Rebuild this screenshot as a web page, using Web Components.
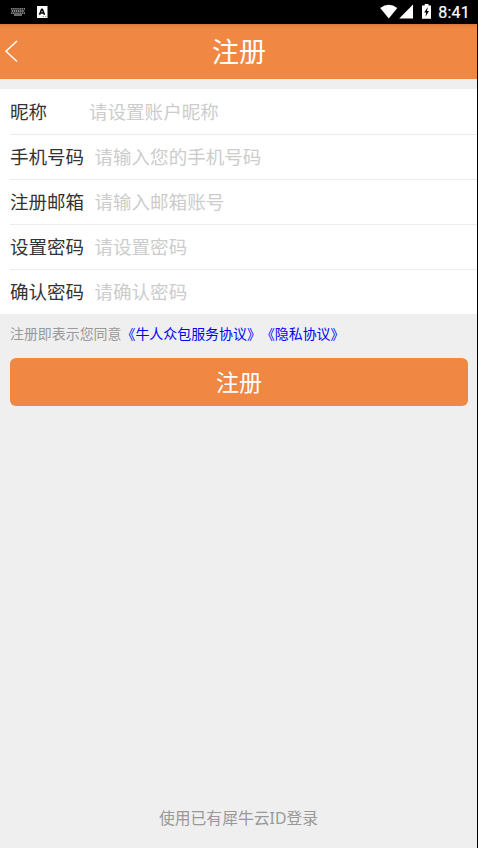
<!DOCTYPE html>
<html lang="zh-CN">
<head>
<meta charset="utf-8">
<title>注册</title>
<style>
html, body { margin: 0; height: 100%; background: #000; }
body { font-family: "Noto Sans CJK SC", sans-serif; overflow: hidden; }
</style>
</head>
<body>
<register-page></register-page>
<script>
const define = (name, html) => {
  const template = document.createElement('template');
  template.innerHTML = html;
  customElements.define(name, class extends HTMLElement {
    constructor() {
      super();
      this.attachShadow({ mode: 'open' }).append(template.content.cloneNode(true));
    }
  });
};

define('status-bar', `
<style>
:host { display: flex; height: 24px; background: #000; color: #fff; align-items: center; box-sizing: border-box; }
svg { display: block; flex: none; }
.keys { margin-left: 11px; }
.app { margin-left: 11px; }
.wifi { margin-left: auto; }
.battery { margin-left: 8px; }
time { font: 400 16px/24px Roboto, sans-serif; margin: 1px 8px 0 7px; letter-spacing: .25px; -webkit-text-stroke: .2px #fff; }
</style>
<svg class="keys" width="15" height="24" viewBox="0 0 15 24" fill="none" stroke="#b4b4b4"><path d="M0 8.900H14M.7 11H13.500M0 13.100H14" stroke-width="1.300" stroke-dasharray="1.500 .6"/><path d="M3 15H11" stroke-width="1.200"/></svg>
<svg class="app" width="11" height="24" viewBox="0 0 11 24"><rect x="-.5" y="6" width="11" height="12" rx=".5" fill="#fff"/><path d="M2.500 14.700L4.600 9.300H5.400L7.500 14.700M3.500 13H6.500" fill="none" stroke="#000" stroke-width="1.500" stroke-linejoin="bevel"/><path d="M5.500 16.500H7M8 16.500H9.400" stroke="#777" stroke-width=".7"/></svg>
<svg class="wifi" width="34" height="24" viewBox="0 0 34 24" fill="#fff"><path d="M.2 8Q8.800 1.600 17.300 8L8.800 18.500Z"/><path d="M33 4.500V18.500H19.200Z"/></svg>
<svg class="battery" width="9" height="24" viewBox="0 0 9 24"><path d="M0 5.500H2.700V4H6.500V5.500H9V18.700H0Z" fill="#fff"/><path d="M5.800 7L2.200 12.500H4.200L3.500 16.800L7 11H5Z" fill="#000"/></svg>
<time>8:41</time>`);

define('nav-bar', `
<style>
:host { display: grid; grid-template-columns: 40px 1fr 39px; align-items: center; height: 55px; background: linear-gradient(#d9783a 0, #eb8340 2px, #f08742 5px); color: #fff; }
h1 { margin: 0; font-size: 27px; line-height: 53px; height: 55px; font-weight: 400; text-align: center; }
svg { display: block; }
</style>
<svg width="24" height="55" viewBox="0 0 24 55" fill="none" stroke="#fff" stroke-width="1.500"><path d="M17 17L6 27.300L17 37.500"/></svg>
<h1><slot></slot></h1>`);

define('form-row', `
<style>
:host { display: block; padding-left: 10px; background: #fff; }
div { display: flex; height: 44px; line-height: 41px; font-size: 18.550px; border-top: 1px solid var(--rule, #ececec); white-space: nowrap; }
.label { color: #333; min-width: 79px; }
.hint { color: #ccc; padding-left: var(--hint-gap, 5.500px); }
</style>
<div><span class="label"><slot name="label"></slot></span><span class="hint"><slot></slot></span></div>`);

define('terms-line', `
<style>
:host { display: block; padding-left: 10px; font-size: 13.950px; line-height: 39px; height: 44px; color: #999; white-space: nowrap; text-spacing-trim: space-all; font-kerning: none; }
::slotted(a) { color: #00f; text-decoration: none; }
</style>
<slot></slot>`);

define('primary-button', `
<style>
:host { display: block; margin: 0 9px 0 10px; }
button { display: block; width: 100%; height: 48px; padding: 0 0 2px; border: 0; border-radius: 6px; background: #f08742; color: #fff; font: 400 23px/46px "Noto Sans CJK SC", sans-serif; }
</style>
<button><slot></slot></button>`);

define('register-page', `
<style>
:host { display: flex; flex-direction: column; height: 848px; }
main { flex: 1; display: flex; flex-direction: column; margin-right: 1px; background: #efefef; }
form { display: block; margin-top: 10px; }
footer { margin-top: auto; margin-bottom: 14px; text-align: center; color: #999; font-size: 15.800px; line-height: 32px; }
.latin { font-family: "Noto Sans", sans-serif; }
</style>
<status-bar></status-bar>
<main>
<nav-bar>注册</nav-bar>
<form>
<form-row style="--hint-gap:0px;--rule:#fff"><span slot="label">昵称</span>请设置账户昵称</form-row>
<form-row><span slot="label">手机号码</span>请输入您的手机号码</form-row>
<form-row><span slot="label">注册邮箱</span>请输入邮箱账号</form-row>
<form-row><span slot="label">设置密码</span>请设置密码</form-row>
<form-row><span slot="label">确认密码</span>请确认密码</form-row>
</form>
<terms-line>注册即表示您同意<a>《牛人众包服务协议》</a><a>《隐私协议》</a></terms-line>
<primary-button>注册</primary-button>
<footer>使用已有犀牛云<span class="latin">ID</span>登录</footer>
</main>`);
</script>
</body>
</html>
